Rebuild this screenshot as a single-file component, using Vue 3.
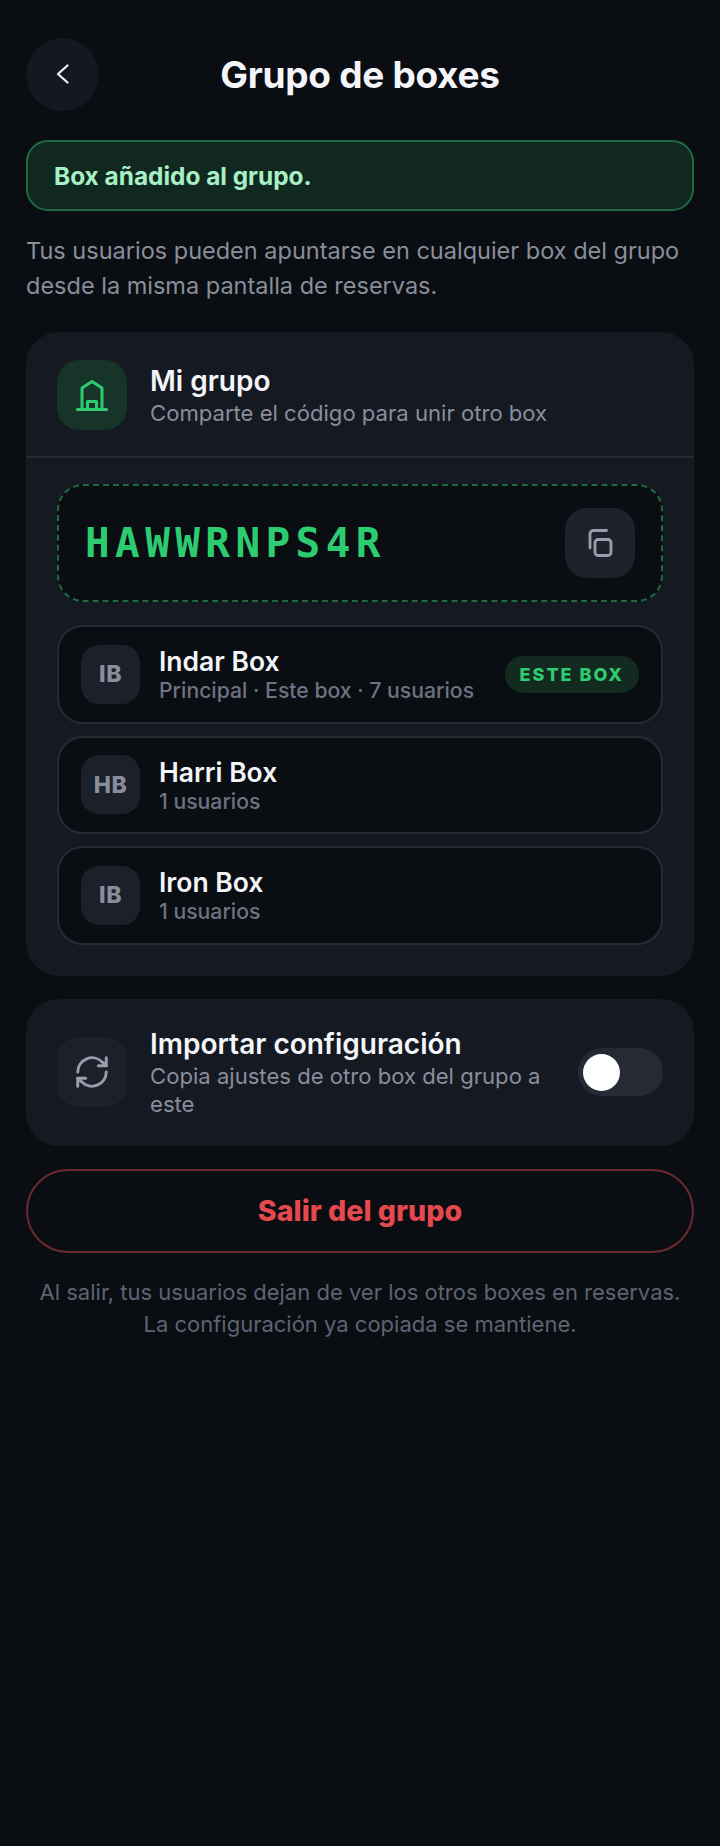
<script setup>
const boxes = [
  { initials: 'IB', name: 'Indar Box', meta: 'Principal · Este box · 7 usuarios', current: true },
  { initials: 'HB', name: 'Harri Box', meta: '1 usuarios' },
  { initials: 'IB', name: 'Iron Box', meta: '1 usuarios' },
]
</script>

<template>
  <main class="page">
    <header class="top">
      <button class="back" aria-label="Volver">
        <svg width="24" height="24" viewBox="0 0 24 24" fill="none" stroke="#f1f3f8" stroke-width="2.2" stroke-linecap="round" stroke-linejoin="round">
          <path d="M16.500 3.500L7 12l9.500 8.500" />
        </svg>
      </button>
      <h1>Grupo de boxes</h1>
    </header>

    <div class="notice">Box añadido al grupo.</div>

    <p class="intro">Tus usuarios pueden apuntarse en cualquier box del grupo desde la misma pantalla de reservas.</p>

    <section class="card group">
      <div class="group__head">
        <span class="tile tile--green">
          <svg width="34" height="34" viewBox="0 0 34 34" fill="none" stroke="#2ecc71" stroke-width="3" stroke-linecap="round" stroke-linejoin="round">
            <path d="M2.500 31.500h29" />
            <path d="M7 31.500V10L17 3.500 27 10v21.500" />
            <path d="M12.500 31.500v-8h9v8" />
          </svg>
        </span>
        <div class="text">
          <h2>Mi grupo</h2>
          <p>Comparte el código para unir otro box</p>
        </div>
      </div>

      <div class="group__body">
        <div class="code">
          <span class="code__value">HAWWRNPS4R</span>
          <button class="tile tile--copy" aria-label="Copiar">
            <svg width="28" height="30" viewBox="0 0 28 30" fill="none" stroke="#9a9eac" stroke-width="2.800" stroke-linecap="round" stroke-linejoin="round">
              <rect x="9" y="11.500" width="16" height="16" rx="3" />
              <path d="M4 20V6A3.500 3.500 0 0 1 7.500 2.500H20.500" />
            </svg>
          </button>
        </div>

        <ul class="boxes">
          <li v-for="box in boxes" :key="box.name" class="box">
            <span class="box__avatar">{{ box.initials }}</span>
            <div class="box__text">
              <strong>{{ box.name }}</strong>
              <small>{{ box.meta }}</small>
            </div>
            <span v-if="box.current" class="badge">ESTE BOX</span>
          </li>
        </ul>
      </div>
    </section>

    <section class="card import">
      <span class="tile tile--grey">
        <svg width="38" height="38" viewBox="0 0 24 24" fill="none" stroke="#9a9eac" stroke-width="1.900" stroke-linecap="round" stroke-linejoin="round">
          <path d="M21 3v5h-5" />
          <path d="M3 12a9 9 0 0 1 15.500-6.200L21 8" />
          <path d="M3 21v-5h5" />
          <path d="M21 12a9 9 0 0 1-15.500 6.200L3 16" />
        </svg>
      </span>
      <div class="text">
        <h2>Importar configuración</h2>
        <p>Copia ajustes de otro box del grupo a este</p>
      </div>
      <span class="switch"><span class="switch__knob"></span></span>
    </section>

    <button class="leave">Salir del grupo</button>

    <p class="footnote">Al salir, tus usuarios dejan de ver los otros boxes en reservas.<br />La configuración ya copiada se mantiene.</p>
  </main>
</template>

<style>
html,
body {
  margin: 0;
  background: #0a0d12;
}
</style>

<style scoped>
.page {
  box-sizing: border-box;
  width: 720px;
  min-height: 1846px;
  padding: 37px 26px 0;
  background: #0a0d12;
  font-family: Inter, "Noto Sans", sans-serif;
  color: #f4f5f9;
}

.top {
  display: flex;
  align-items: center;
  height: 74px;
}

.back {
  display: flex;
  flex: none;
  align-items: center;
  justify-content: center;
  width: 73px;
  height: 73px;
  padding: 0;
  border: 0;
  border-radius: 50%;
  background: #141821;
}

.top h1 {
  flex: 1;
  margin: 0;
  padding: 2px 73px 0 0;
  font-size: 37px;
  font-weight: 700;
  letter-spacing: -0.3px;
  line-height: 72px;
  text-align: center;
}

.notice {
  box-sizing: border-box;
  height: 71px;
  margin-top: 29px;
  padding: 0 26px;
  border: 2px solid #1f6b41;
  border-radius: 22px;
  background: #112821;
  color: #a7f0c4;
  font-size: 24.400px;
  font-weight: 700;
  line-height: 68px;
}

.intro {
  margin: 22px 0 0;
  color: #8a8e9c;
  font-size: 23.500px;
  line-height: 35px;
}

.card {
  border-radius: 33px;
  background: #151922;
}

.group {
  margin-top: 29px;
  overflow: hidden;
}

.group__head {
  display: flex;
  align-items: center;
  gap: 23px;
  box-sizing: border-box;
  height: 126px;
  padding: 2px 31px 0;
  border-bottom: 2px solid #262a35;
}

.tile {
  display: flex;
  flex: none;
  align-items: center;
  justify-content: center;
  width: 70px;
  height: 70px;
  padding: 0;
  border: 0;
  border-radius: 22px;
}

.tile--green {
  background: #173429;
}

.tile--copy {
  background: #1e222d;
}

.tile--grey {
  background: #1c202a;
}

.text {
  flex: 1;
  min-width: 0;
}

.text h2 {
  margin: 0;
  font-size: 28px;
  font-weight: 600;
  line-height: 36px;
}

.text p {
  margin: 0;
  color: #8a8e9c;
  font-size: 22.100px;
  line-height: 28px;
}

.group__body {
  padding: 26px 31px 31px;
}

.code {
  display: flex;
  align-items: center;
  justify-content: space-between;
  box-sizing: border-box;
  height: 118px;
  padding: 0 26px 0 26px;
  border: 2px dashed #1f6b41;
  border-radius: 26px;
  background: #0a0d12;
}

.code__value {
  color: #2ecc71;
  font-family: "DejaVu Sans Mono", "Liberation Mono", monospace;
  font-size: 41px;
  font-weight: 700;
  letter-spacing: 5.400px;
}

.boxes {
  display: flex;
  flex-direction: column;
  gap: 12px;
  margin: 23px 0 0;
  padding: 0;
  list-style: none;
}

.box {
  display: flex;
  align-items: center;
  gap: 19px;
  box-sizing: border-box;
  height: 98.500px;
  padding: 0 22px;
  border: 2px solid #262a35;
  border-radius: 26px;
  background: #0a0d12;
}

.box__avatar {
  display: flex;
  flex: none;
  align-items: center;
  justify-content: center;
  width: 59px;
  height: 59px;
  border-radius: 18px;
  background: #1c202b;
  color: #8a8e9c;
  font-size: 23px;
  font-weight: 800;
  letter-spacing: 0.5px;
}

.box__text {
  flex: 1;
  min-width: 0;
  padding-top: 2px;
}

.box__text strong {
  display: block;
  font-size: 26.500px;
  font-weight: 600;
  line-height: 30px;
}

.box__text small {
  display: block;
  color: #6e7282;
  font-size: 21.200px;
  font-weight: 500;
  line-height: 28px;
}

.badge {
  flex: none;
  padding: 0 15px;
  border-radius: 18px;
  background: #122a20;
  color: #2ecc71;
  font-size: 18px;
  font-weight: 800;
  letter-spacing: 2px;
  line-height: 37px;
}

.import {
  display: flex;
  align-items: center;
  gap: 23px;
  box-sizing: border-box;
  height: 147px;
  margin-top: 23px;
  padding: 0 31px;
}

.switch {
  display: flex;
  flex: none;
  align-items: center;
  box-sizing: border-box;
  width: 85px;
  height: 48px;
  padding: 0 5px;
  border-radius: 24px;
  background: #262a35;
}

.switch__knob {
  width: 37px;
  height: 37px;
  border-radius: 50%;
  background: #fff;
}

.leave {
  display: block;
  box-sizing: border-box;
  width: 100%;
  height: 84px;
  margin-top: 23px;
  padding: 0;
  border: 2px solid #6b2a30;
  border-radius: 42px;
  background: transparent;
  color: #e5484d;
  font-family: inherit;
  font-size: 28.600px;
  font-weight: 800;
}

.footnote {
  margin: 23px 0 0;
  color: #5f6372;
  font-size: 22px;
  line-height: 32px;
  text-align: center;
}
</style>
